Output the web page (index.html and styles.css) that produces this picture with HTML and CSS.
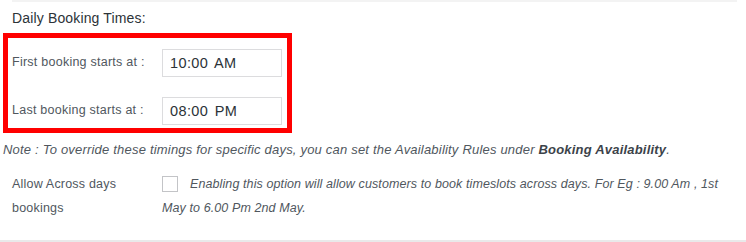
FILE: index.html
```html
<!DOCTYPE html>
<html>
<head>
<meta charset="utf-8">
<link rel="stylesheet" href="styles.css">
</head>
<body>
<div class="top-line"></div>
<div class="section-title">Daily Booking Times:</div>
<div class="highlight-box">
  <div class="time-row">
    <label class="row-label">First booking starts at :</label>
    <div class="time-input">10:00 AM</div>
  </div>
  <div class="time-row">
    <label class="row-label">Last booking starts at :</label>
    <div class="time-input">08:00 PM</div>
  </div>
</div>
<p class="note">Note : To override these timings for specific days, you can set the Availability Rules under <b>Booking Availability</b>.</p>
<div class="option-row">
  <div class="option-label">Allow Across days<br>bookings</div>
  <div class="option-desc"><span class="checkbox"></span><i>Enabling this option will allow customers to book timeslots across days. For Eg : 9.00 Am , 1st May to 6.00 Pm 2nd May.</i></div>
</div>
<div class="bottom-band"></div>
</body>
</html>
```

FILE: styles.css
```css
html, body {
  margin: 0;
  padding: 0;
  background: #ffffff;
  width: 746px;
  height: 242px;
  overflow: hidden;
  font-family: "Liberation Sans", Arial, sans-serif;
  color: #3c434a;
}
.top-line {
  margin-left: 12px;
  width: 725px;
  height: 2px;
  background: #f3f3f3;
}
.section-title {
  margin: 8px 0 0 12px;
  font-size: 14px;
  line-height: 17px;
  letter-spacing: 0.15px;
  color: #2c3338;
  height: 23px;
}
.highlight-box {
  margin-left: 3px;
  width: 289px;
  box-sizing: border-box;
  border: 5px solid #ff0000;
  padding: 11px 0 3px 4px;
  display: flex;
  flex-direction: column;
  gap: 20px;
}
.time-row {
  display: flex;
  align-items: center;
}
.row-label {
  width: 150px;
  font-size: 12.5px;
  letter-spacing: 0.25px;
  color: #50575e;
  margin-top: -2px;
}
.time-input {
  width: 120px;
  height: 28px;
  box-sizing: border-box;
  border: 1px solid #dcdcde;
  padding-left: 7px;
  font-size: 14.5px;
  letter-spacing: 0.4px;
  word-spacing: 2px;
  line-height: 27px;
  color: #2c3338;
}
.note {
  margin: 8px 0 0 3px;
  font-size: 13px;
  line-height: 18px;
  letter-spacing: 0.2px;
  font-style: italic;
  color: #50575e;
}
.note b {
  color: #3c434a;
}
.option-row {
  display: flex;
  margin-top: 13px;
  padding-left: 12px;
  font-size: 12.5px;
  line-height: 24px;
  color: #50575e;
}
.option-label {
  width: 150px;
  flex: none;
  letter-spacing: 0.2px;
}
.option-desc {
  width: 570px;
  letter-spacing: 0.1px;
  color: #50575e;
}
.checkbox {
  display: inline-block;
  width: 16px;
  height: 16px;
  box-sizing: border-box;
  border: 1px solid #c3c4c7;
  vertical-align: -4px;
  margin-right: 12px;
}
.bottom-band {
  margin-top: 20px;
  height: 4px;
  background: #e9e9ea;
}
```
